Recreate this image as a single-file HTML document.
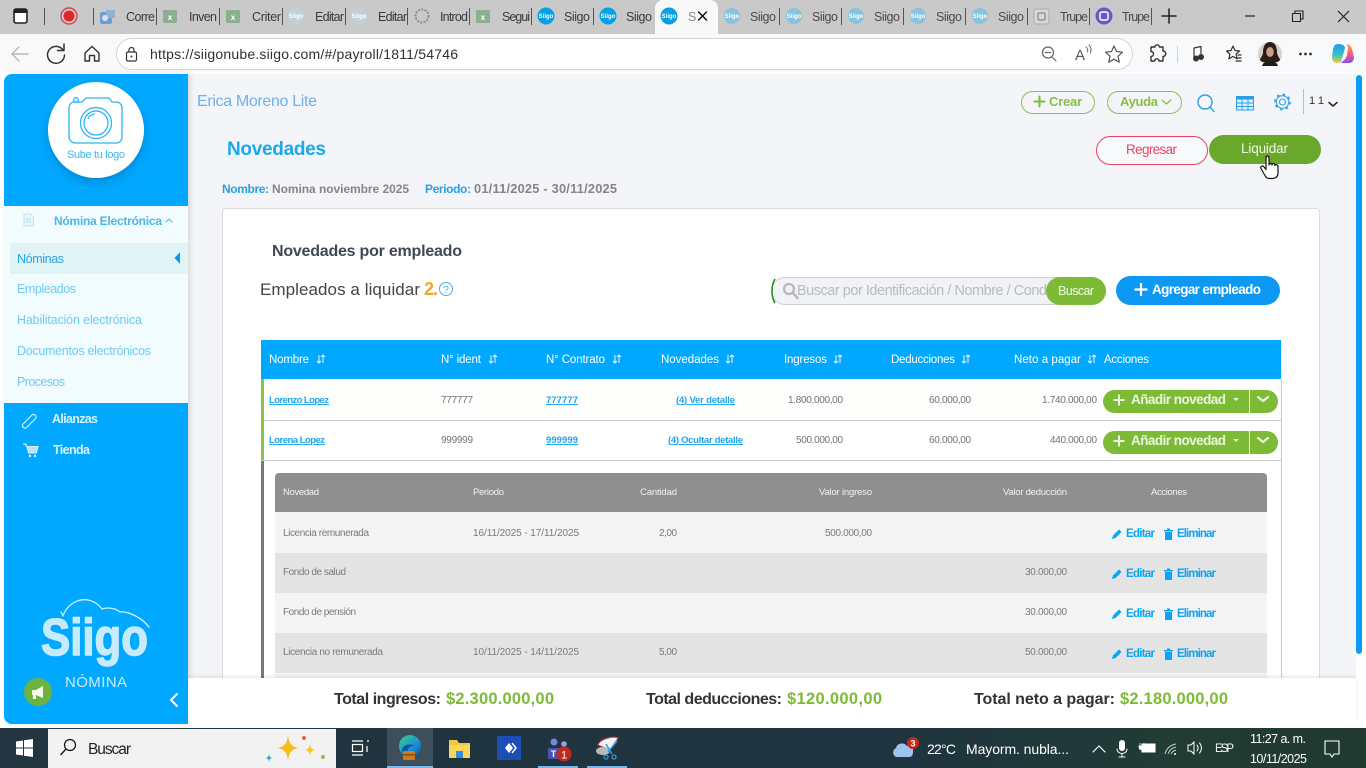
<!DOCTYPE html>
<html lang="es"><head><meta charset="utf-8"><title>Siigo Nube - Novedades</title>
<style>
html,body{margin:0;padding:0;width:1366px;height:768px;overflow:hidden;background:#fff;font-family:"Liberation Sans",Arial,sans-serif}
.b{position:absolute;box-sizing:border-box}
svg{position:absolute;left:0;top:0;filter:blur(.3px)}
text{font-family:"Liberation Sans",Arial,sans-serif;white-space:pre}
.tb{font-size:12.5px;fill:#3a3a3a}.tf{font-size:12.5px;fill:#4a4a4a}
.side{font-size:12.5px;fill:#6fcbf2}
.th{font-size:11.5px;fill:#fff}
.lk{font-size:9.5px;font-weight:700;fill:#1ea5ec;text-decoration:underline}
.n{font-size:10px;fill:#737373}
.sh{font-size:9.5px;fill:#f2f2f2}
.sr{font-size:10px;fill:#7a7a7a}
.ac{font-size:11.5px;font-weight:700;fill:#0ca4f5}
.tot{font-size:16px;font-weight:700;fill:#333}
.gr{font-size:16.5px;font-weight:700;fill:#7dbb36}
.add{font-size:13.5px;font-weight:700;fill:#eaf6dc}
.w{fill:#fff}
.ln{fill:none;stroke-linecap:round;stroke-linejoin:round}
</style></head><body>
<!-- browser chrome -->
<div class="b" style="left:0;top:0;width:1366px;height:34px;background:#c9c9c9"></div>
<div class="b" style="left:655px;top:0;width:63px;height:34px;background:#f8f8f8;border-radius:8px 8px 0 0"></div>
<div class="b" style="left:0;top:34px;width:1366px;height:40px;background:#f8f9fa"></div>
<div class="b" style="left:116px;top:38px;width:1017px;height:32px;background:#fff;border:1px solid #d4d4d4;border-radius:16px"></div>
<!-- page -->
<div class="b" style="left:0;top:72px;width:1366px;height:656px;background:#fff"></div>
<div class="b" style="left:188px;top:74px;width:1168px;height:604px;background:#f3f5f9"></div>
<div class="b" style="left:1356px;top:75px;width:6px;height:579px;background:#0a9bf6;border-radius:3px"></div>
<div class="b" style="left:222px;top:208px;width:1098px;height:480px;background:#fff;border:1px solid #dcdcdc;border-radius:4px"></div>
<!-- sidebar -->
<div class="b" style="left:4px;top:74px;width:184px;height:650px;background:#00a9ff;border-radius:8px 0 0 8px;box-shadow:2px 0 6px rgba(0,0,0,.12)"></div>
<div class="b" style="left:4px;top:206px;width:184px;height:197px;background:#f2fcfe"></div>
<div class="b" style="left:10px;top:243px;width:178px;height:31px;background:#e0f3f5"></div>
<div class="b" style="left:48px;top:82px;width:96px;height:96px;border-radius:50%;background:#fff;box-shadow:0 4px 10px rgba(0,60,120,.3)"></div>
<!-- buttons -->
<div class="b" style="left:1021px;top:91px;width:74px;height:23px;border:1px solid #8cc152;border-radius:12px"></div>
<div class="b" style="left:1107px;top:91px;width:75px;height:23px;border:1px solid #8cc152;border-radius:12px"></div>
<div class="b" style="left:1096px;top:136px;width:112px;height:29px;border:1px solid #e8436a;border-radius:15px;background:#f8f9fb"></div>
<div class="b" style="left:1209px;top:135px;width:112px;height:29px;background:#6aa82c;border-radius:15px"></div>
<div class="b" style="left:771px;top:277px;width:330px;height:28px;background:#f0f2f6;border:1px solid #cfcfcf;border-radius:14px"></div>
<div class="b" style="left:1046px;top:277px;width:60px;height:28px;background:#7dbb36;border-radius:14px"></div>
<div class="b" style="left:1116px;top:276px;width:164px;height:29px;background:#0d98f3;border-radius:15px"></div>
<!-- main table -->
<div class="b" style="left:261px;top:340px;width:1020px;height:39px;background:#00a9ff"></div>
<div class="b" style="left:261px;top:379px;width:1020px;height:42px;background:#fdfdfb;border-bottom:1px solid #c9c9c9"></div>
<div class="b" style="left:261px;top:421px;width:1020px;height:40px;background:#fff;border-bottom:1px solid #c9c9c9"></div>
<div class="b" style="left:261px;top:379px;width:3px;height:81px;background:#8bc34a"></div>
<div class="b" style="left:261px;top:461px;width:3px;height:217px;background:#777"></div>
<div class="b" style="left:1281px;top:379px;width:1px;height:299px;background:#c9c9c9"></div>
<div class="b" style="left:1103px;top:390px;width:146px;height:23px;background:#7dbb36;border-radius:12px 0 0 12px"></div>
<div class="b" style="left:1250px;top:390px;width:28px;height:23px;background:#7dbb36;border-radius:0 12px 12px 0"></div>
<div class="b" style="left:1103px;top:431px;width:146px;height:23px;background:#7dbb36;border-radius:12px 0 0 12px"></div>
<div class="b" style="left:1250px;top:431px;width:28px;height:23px;background:#7dbb36;border-radius:0 12px 12px 0"></div>
<!-- sub table -->
<div class="b" style="left:275px;top:473px;width:992px;height:39px;background:#8f8f8f;border-radius:4px 4px 0 0"></div>
<div class="b" style="left:275px;top:512px;width:992px;height:41px;background:#f4f4f4"></div>
<div class="b" style="left:275px;top:553px;width:992px;height:40px;background:#e4e4e4"></div>
<div class="b" style="left:275px;top:593px;width:992px;height:40px;background:#f4f4f4"></div>
<div class="b" style="left:275px;top:633px;width:992px;height:40px;background:#e4e4e4"></div>
<div class="b" style="left:275px;top:673px;width:992px;height:5px;background:#f4f4f4"></div>
<!-- footer -->
<div class="b" style="left:188px;top:678px;width:1168px;height:46px;background:#fff;box-shadow:0 -2px 3px rgba(0,0,0,.08)"></div>
<!-- taskbar -->
<div class="b" style="left:0;top:728px;width:1366px;height:40px;background:linear-gradient(90deg,#223540 0%,#1f3440 65%,#223c33 88%,#21392f 100%)"></div>
<div class="b" style="left:48px;top:729px;width:288px;height:39px;background:#f2f2f2"></div>
<div class="b" style="left:387px;top:728px;width:46px;height:40px;background:#3d4f5a"></div>
<div class="b" style="left:387px;top:766px;width:46px;height:2px;background:#76b9ed"></div>
<div class="b" style="left:538px;top:766px;width:40px;height:2px;background:#76b9ed"></div>
<div class="b" style="left:587px;top:766px;width:40px;height:2px;background:#76b9ed"></div>

<svg width="1366" height="768" viewBox="0 0 1366 768" xmlns="http://www.w3.org/2000/svg">
<defs>
<linearGradient id="cp" x1="0" y1="0" x2="0" y2="1"><stop offset="0" stop-color="#1f9be8"/><stop offset=".55" stop-color="#35c0c8"/><stop offset="1" stop-color="#f0c93a"/></linearGradient>
<linearGradient id="cp2" x1="0" y1="0" x2="0" y2="1"><stop offset="0" stop-color="#f5a13a"/><stop offset=".55" stop-color="#ee5a8a"/><stop offset="1" stop-color="#8a4fe0"/></linearGradient>
<linearGradient id="ed" x1="0" y1="0" x2="1" y2="1"><stop offset="0" stop-color="#3bd08a"/><stop offset=".6" stop-color="#1b8fd8"/><stop offset="1" stop-color="#0c4f9e"/></linearGradient>
</defs>
<!-- tab strip -->
<rect x="14" y="9" width="13" height="14" rx="2" fill="#fff" stroke="#222" stroke-width="1.6"/><rect x="14" y="9" width="13" height="4" fill="#222"/>
<g fill="#555"><rect x="44" y="8" width="1" height="17"/><rect x="93" y="8" width="1" height="17"/><rect x="156" y="8" width="1" height="17"/><rect x="219" y="8" width="1" height="17"/><rect x="282" y="8" width="1" height="17"/><rect x="345" y="8" width="1" height="17"/><rect x="407" y="8" width="1" height="17"/><rect x="469" y="8" width="1" height="17"/><rect x="531" y="8" width="1" height="17"/><rect x="593" y="8" width="1" height="17"/><rect x="779" y="8" width="1" height="17"/><rect x="841" y="8" width="1" height="17"/><rect x="903" y="8" width="1" height="17"/><rect x="965" y="8" width="1" height="17"/><rect x="1027" y="8" width="1" height="17"/><rect x="1089" y="8" width="1" height="17"/><rect x="1151" y="8" width="1" height="17"/></g>
<circle cx="69" cy="16" r="8" fill="none" stroke="#d8454a" stroke-width="1.4"/><circle cx="69" cy="16" r="5.5" fill="#e0262b"/>
<rect x="100" y="12" width="12" height="12" rx="2" fill="#6d9fd0"/><path d="M106 10l9 0 0 8-9 0z" fill="#8fb3d6"/><circle cx="105" cy="18" r="3" fill="#fff" opacity=".7"/>
<g fill="#8bb08f"><rect x="163" y="10" width="14" height="13" rx="1"/><rect x="226" y="10" width="14" height="13" rx="1"/><rect x="476" y="10" width="14" height="13" rx="1"/></g>
<g font-size="8" fill="#fff" text-anchor="middle" font-weight="700"><text x="170" y="20">x</text><text x="233" y="20">x</text><text x="483" y="20">x</text></g>
<g fill="#bfd0d8"><circle cx="296" cy="16" r="8"/><circle cx="359" cy="16" r="8"/></g>
<circle cx="422" cy="16" r="6.5" fill="none" stroke="#8a8a8a" stroke-width="2" stroke-dasharray="2 1.3"/>
<g fill="#06a0e6"><circle cx="546" cy="16" r="8.5"/><circle cx="608" cy="16" r="8.5"/><circle cx="669" cy="16" r="8.5"/></g>
<g fill="#86c3dd"><circle cx="732" cy="16" r="8"/><circle cx="794" cy="16" r="8"/><circle cx="856" cy="16" r="8"/><circle cx="918" cy="16" r="8"/><circle cx="980" cy="16" r="8"/></g>
<g font-size="6" fill="#fff" text-anchor="middle" font-weight="700"><text x="296" y="18">Siigo</text><text x="359" y="18">Siigo</text><text x="546" y="18">Siigo</text><text x="608" y="18">Siigo</text><text x="669" y="18">Siigo</text><text x="732" y="18">Siigo</text><text x="794" y="18">Siigo</text><text x="856" y="18">Siigo</text><text x="918" y="18">Siigo</text><text x="980" y="18">Siigo</text></g>
<rect x="1034" y="9" width="15" height="15" rx="2" fill="#d8d8d8" stroke="#aaa"/><rect x="1038" y="13" width="7" height="7" rx="1" fill="none" stroke="#777"/>
<circle cx="1104" cy="16" r="8.5" fill="#6a5ac8"/><rect x="1100" y="12" width="8" height="8" rx="2" fill="none" stroke="#fff" stroke-width="1.5"/>
<text class="tb" x="126" y="21" textLength="29">Corre</text><text class="tb" x="189" y="21" textLength="28">Inven</text><text class="tb" x="252" y="21" textLength="29">Criter</text><text class="tb" x="315" y="21" textLength="29">Editar</text><text class="tb" x="378" y="21" textLength="29">Editar</text><text class="tb" x="440" y="21" textLength="28">Introd</text><text class="tb" x="502" y="21" textLength="28">Segui</text><text class="tb" x="564" y="21" textLength="26">Siigo</text><text class="tb" x="626" y="21" textLength="26">Siigo</text><text x="688" y="21" font-size="12.5" fill="#888" textLength="4">S</text>
<text class="tf" x="750" y="21" textLength="26">Siigo</text><text class="tf" x="812" y="21" textLength="26">Siigo</text><text class="tf" x="874" y="21" textLength="26">Siigo</text><text class="tf" x="936" y="21" textLength="26">Siigo</text><text class="tf" x="998" y="21" textLength="26">Siigo</text><text class="tf" x="1060" y="21" textLength="28">Trupe</text><text class="tf" x="1122" y="21" textLength="28">Trupe</text>
<path class="ln" d="M698.500 12l8 8M706.500 12l-8 8" stroke="#111" stroke-width="1.500"/>
<path class="ln" d="M1169 9v14M1162 16h14" stroke="#222" stroke-width="1.5"/>
<path d="M1245 16h10" stroke="#222" stroke-width="1.2"/>
<path fill="none" stroke="#222" stroke-width="1.1" d="M1292.500 13.500h8v8h-8zM1295 13.500v-2.500h8v8h-2.500"/>
<path d="M1338 11l11 11M1349 11l-11 11" stroke="#222" stroke-width="1.2"/>
<!-- toolbar -->
<path class="ln" d="M28 54H12M19 47l-7 7 7 7" stroke="#b8b8b8" stroke-width="1.4"/>
<path class="ln" d="M63 50a8.500 8.500 0 1 0 1.500 5M64 44v6.500h-6.500" stroke="#333" stroke-width="1.5"/>
<path class="ln" d="M85 53l7-6.500 7 6.500v8h-4.500v-5.500h-5V61H85z" stroke="#333" stroke-width="1.4"/>
<rect x="126.500" y="52" width="10" height="9" rx="1.500" fill="none" stroke="#333" stroke-width="1.2"/><path d="M129 52v-2a2.500 2.500 0 0 1 5 0v2" fill="none" stroke="#333" stroke-width="1.2"/><circle cx="131.500" cy="56.500" r="1" fill="#333"/>
<text x="150" y="59" font-size="14" fill="#303030" textLength="308">https://siigonube.siigo.com/#/payroll/1811/54746</text>
<circle cx="1048" cy="52.500" r="5.500" fill="none" stroke="#666" stroke-width="1.2"/><path class="ln" d="M1045.500 52.500h5M1052 57l4 4" stroke="#666" stroke-width="1.2"/>
<text x="1075" y="60" font-size="15" fill="#555">A</text><path class="ln" d="M1086 47c1.500 1 2 3 1.500 5M1089 45c2 2 2.500 5 1.500 8" stroke="#666" stroke-width="1"/>
<path class="ln" d="M1114 46l2.500 5.500 6 .7-4.500 4 1.300 6-5.300-3-5.300 3 1.300-6-4.500-4 6-.7z" stroke="#555" stroke-width="1.2"/>
<path class="ln" d="M1152 47h3a2.200 2.200 0 0 1 4.400 0h3.600v4a2.200 2.200 0 0 1 0 5.500v4.500h-4a2.200 2.200 0 0 0-4.400 0H1151v-4.500a2.200 2.200 0 0 0 0-5V47z" stroke="#333" stroke-width="1.4"/>
<rect x="1177" y="46" width="1" height="17" fill="#d0d0d0"/>
<path class="ln" d="M1194 57v-9l7-1.500v7" stroke="#333" stroke-width="1.2"/><circle cx="1196" cy="58.500" r="3" fill="#333"/><circle cx="1201" cy="57" r="3" fill="#333"/>
<path class="ln" d="M1233 46l2 4.500 4.500.5-3.400 3 1 4.800-4.100-2.400-4.100 2.400 1-4.800-3.400-3 4.500-.5zM1238 55h3M1238 58h3M1236 61h5" stroke="#333" stroke-width="1.2"/>
<circle cx="1270" cy="54" r="12" fill="#d6d3cf"/><path d="M1270 42c-5 0-7 5-7 10 0 4-3 6-3 8 3 4 17 4 20 0 0-2-3-4-3-8 0-5-2-10-7-10z" fill="#2a1d18"/><ellipse cx="1270" cy="52" rx="3.800" ry="5" fill="#c9a08a"/><path d="M1262 66c1-6 15-6 16 0z" fill="#1b1b1b"/>
<g fill="#333"><circle cx="1300.500" cy="54" r="1.400"/><circle cx="1305.500" cy="54" r="1.400"/><circle cx="1310.500" cy="54" r="1.400"/></g>
<path d="M1338 44c-3 0-4 2-5 5l-1 8c0 4 2 6 5 6l4-1 4-14c0-3-4-4-7-4z" fill="url(#cp)"/><path d="M1346 44c3 0 5 2 6 5l2 8c0 4-2 6-5 6h-8l3-3c2-1 2-3 3-5l1-7c0-2-1-4-2-4z" fill="url(#cp2)"/>
<!-- header -->
<text x="197" y="106" font-size="16" fill="#6cb2ea" textLength="120">Erica Moreno Lite</text>
<path class="ln" d="M1039.500 96.500v10M1034.500 101.500h10" stroke="#7dbb36" stroke-width="2"/>
<text x="1049" y="106" font-size="13" font-weight="700" fill="#86bf45" textLength="33">Crear</text>
<text x="1120" y="106" font-size="13" font-weight="700" fill="#86bf45" textLength="38">Ayuda</text>
<path class="ln" d="M1162 100l4.500 4 4.500-4" stroke="#86bf45" stroke-width="1.200"/>
<circle cx="1205" cy="102" r="7" fill="none" stroke="#2a9fe8" stroke-width="1.400"/><path class="ln" d="M1210 107l4 4.500" stroke="#2a9fe8" stroke-width="1.400"/>
<rect x="1236.500" y="96.500" width="17" height="13.500" fill="#d8effc" stroke="#2a9fe8" stroke-width="1"/><rect x="1236" y="96" width="18" height="3.500" fill="#2a9fe8"/><path d="M1236.500 103h17M1236.500 106.500h17M1242 99.500V110M1248 99.500V110" stroke="#2a9fe8" stroke-width=".9"/>
<circle cx="1282.500" cy="102" r="6.300" fill="none" stroke="#2a9fe8" stroke-width="1.100"/><circle cx="1282.500" cy="102" r="7.600" fill="none" stroke="#2a9fe8" stroke-width="1.600" stroke-dasharray="2.400 3.570"/><circle cx="1282.500" cy="102" r="3" fill="none" stroke="#2a9fe8" stroke-width="1.100"/>
<rect x="1303" y="89" width="1" height="25" fill="#bcbcbc"/>
<text x="1309" y="104" font-size="11" fill="#333" textLength="15">1 1</text>
<path class="ln" d="M1329 102.500l4 3.500 4-3.500" stroke="#222" stroke-width="1.500"/>
<text x="227" y="155" font-size="19" font-weight="700" fill="#1aa9ee" textLength="99">Novedades</text>
<text x="1126" y="154" font-size="13.500" fill="#e8436a" textLength="51">Regresar</text>
<text x="1241" y="153" font-size="13.500" fill="#f1f8e8" textLength="47">Liquidar</text>
<text x="222" y="193" font-size="12" font-weight="700" fill="#2b9fe6" textLength="47">Nombre:</text>
<text x="272" y="193" font-size="12" font-weight="700" fill="#858585" textLength="137">Nomina noviembre 2025</text>
<text x="425" y="193" font-size="12" font-weight="700" fill="#2b9fe6" textLength="46">Periodo:</text>
<text x="474" y="193" font-size="12.800" font-weight="700" fill="#858585" textLength="143">01/11/2025 - 30/11/2025</text>
<!-- card head -->
<text x="272" y="256" font-size="16" font-weight="700" fill="#414855" textLength="190">Novedades por empleado</text>
<text x="260" y="295" font-size="17" fill="#444" textLength="160">Empleados a liquidar</text>
<text x="424" y="295" font-size="18" font-weight="700" fill="#f5a623" textLength="14">2.</text>
<circle cx="446" cy="289" r="6.500" fill="none" stroke="#4aaee8" stroke-width="1"/><text x="446" y="293" font-size="10" fill="#4aaee8" text-anchor="middle">?</text>
<path d="M775 279c-4 6-4 18 0 24" fill="none" stroke="#1f8a1f" stroke-width="1.500"/>
<circle cx="789" cy="289" r="5" fill="none" stroke="#b9b9b9" stroke-width="2.300"/><path class="ln" d="M793 293l4.500 5" stroke="#b9b9b9" stroke-width="2.600"/>
<text x="797" y="295" font-size="14.500" fill="#b9bbbf" textLength="250">Buscar por Identificación / Nombre / Cond</text>
<text x="1058" y="295" font-size="12.500" fill="#f1f8e8" textLength="36">Buscar</text>
<path d="M1141 283v13M1134.500 289.500h13" stroke="#fff" stroke-width="2.200"/>
<text x="1152" y="294" font-size="13.500" font-weight="700" class="w" textLength="109">Agregar empleado</text>
<!-- table head -->
<text class="th" x="269" y="363" textLength="40">Nombre</text><text class="th" x="441" y="363" textLength="40">N° ident</text><text class="th" x="546" y="363" textLength="59">N° Contrato</text><text class="th" x="661" y="363" textLength="58">Novedades</text><text class="th" x="784" y="363" textLength="43">Ingresos</text><text class="th" x="891" y="363" textLength="64">Deducciones</text><text class="th" x="1014" y="363" textLength="67">Neto a pagar</text><text class="th" x="1104" y="363" textLength="45">Acciones</text>
<g stroke="#e6f6ff" stroke-width="1" fill="none"><path d="M319 355v8m-2-2l2 2 2-2M323 363v-8m-2 2l2-2 2 2"/><path d="M491 355v8m-2-2l2 2 2-2M495 363v-8m-2 2l2-2 2 2"/><path d="M615 355v8m-2-2l2 2 2-2M619 363v-8m-2 2l2-2 2 2"/><path d="M728 355v8m-2-2l2 2 2-2M732 363v-8m-2 2l2-2 2 2"/><path d="M836 355v8m-2-2l2 2 2-2M840 363v-8m-2 2l2-2 2 2"/><path d="M964 355v8m-2-2l2 2 2-2M968 363v-8m-2 2l2-2 2 2"/><path d="M1090 355v8m-2-2l2 2 2-2M1094 363v-8m-2 2l2-2 2 2"/></g>
<!-- rows -->
<text class="lk" x="269" y="403" textLength="60">Lorenzo Lopez</text><text class="n" x="441" y="403" textLength="32">777777</text><text class="lk" x="546" y="403" textLength="32">777777</text><text class="lk" x="676" y="403" textLength="59">(4) Ver detalle</text><text class="n" x="788" y="403" textLength="55">1.800.000,00</text><text class="n" x="929" y="403" textLength="42">60.000,00</text><text class="n" x="1042" y="403" textLength="55">1.740.000,00</text>
<text class="lk" x="269" y="443" textLength="56">Lorena Lopez</text><text class="n" x="441" y="443" textLength="32">999999</text><text class="lk" x="546" y="443" textLength="32">999999</text><text class="lk" x="668" y="443" textLength="75">(4) Ocultar detalle</text><text class="n" x="796" y="443" textLength="47">500.000,00</text><text class="n" x="929" y="443" textLength="42">60.000,00</text><text class="n" x="1050" y="443" textLength="47">440.000,00</text>
<g stroke="#eaf6dc" stroke-width="2"><path d="M1119 394.500v11M1113.500 400h11"/><path d="M1119 435.500v11M1113.500 441h11"/></g>
<text class="add" x="1131" y="404" textLength="95">Añadir novedad</text><text class="add" x="1131" y="445" textLength="95">Añadir novedad</text>
<g fill="#eaf6dc"><path d="M1233 398h6l-3 3z"/><path d="M1233 439h6l-3 3z"/></g>
<g class="ln" stroke="#eaf6dc" stroke-width="2.200" fill="none"><path d="M1258 397l5 4 5-4"/><path d="M1258 438l5 4 5-4"/></g>
<!-- sub table text -->
<text class="sh" x="283" y="495" textLength="36">Novedad</text><text class="sh" x="473" y="495" textLength="31">Periodo</text><text class="sh" x="640" y="495" textLength="37">Cantidad</text><text class="sh" x="819" y="495" textLength="53">Valor ingreso</text><text class="sh" x="1003" y="495" textLength="64">Valor deducción</text><text class="sh" x="1151" y="495" textLength="36">Acciones</text>
<text class="sr" x="283" y="536" textLength="86">Licencia remunerada</text><text class="sr" x="473" y="536" textLength="106">16/11/2025 - 17/11/2025</text><text class="sr" x="659" y="536" textLength="18">2,00</text><text class="sr" x="825" y="536" textLength="47">500.000,00</text>
<text class="sr" x="283" y="575" textLength="63">Fondo de salud</text><text class="sr" x="1025" y="575" textLength="42">30.000,00</text>
<text class="sr" x="283" y="615" textLength="73">Fondo de pensión</text><text class="sr" x="1025" y="615" textLength="42">30.000,00</text>
<text class="sr" x="283" y="655" textLength="100">Licencia no remunerada</text><text class="sr" x="473" y="655" textLength="106">10/11/2025 - 14/11/2025</text><text class="sr" x="659" y="655" textLength="18">5,00</text><text class="sr" x="1025" y="655" textLength="42">50.000,00</text>
<text class="ac" x="1126" y="537" textLength="29">Editar</text><text class="ac" x="1177" y="537" textLength="39">Eliminar</text>
<text class="ac" x="1126" y="577" textLength="29">Editar</text><text class="ac" x="1177" y="577" textLength="39">Eliminar</text>
<text class="ac" x="1126" y="617" textLength="29">Editar</text><text class="ac" x="1177" y="617" textLength="39">Eliminar</text>
<text class="ac" x="1126" y="657" textLength="29">Editar</text><text class="ac" x="1177" y="657" textLength="39">Eliminar</text>
<g fill="#0ca4f5">
<path d="M1112 539l1-3.500 6-6 2.500 2.500-6 6z"/><path d="M1164 530h9v1.500h-9zM1167 528.500h3v1.500h-3zM1165 532h7v8h-7z"/>
<path d="M1112 579l1-3.500 6-6 2.500 2.500-6 6z"/><path d="M1164 570h9v1.500h-9zM1167 568.500h3v1.500h-3zM1165 572h7v8h-7z"/>
<path d="M1112 619l1-3.500 6-6 2.500 2.500-6 6z"/><path d="M1164 610h9v1.500h-9zM1167 608.500h3v1.500h-3zM1165 612h7v8h-7z"/>
<path d="M1112 659l1-3.500 6-6 2.500 2.500-6 6z"/><path d="M1164 650h9v1.500h-9zM1167 648.500h3v1.500h-3zM1165 652h7v8h-7z"/>
</g>
<!-- footer text -->
<text class="tot" x="334" y="704" textLength="107">Total ingresos:</text><text class="gr" x="446" y="704" textLength="108">$2.300.000,00</text>
<text class="tot" x="646" y="704" textLength="136">Total deducciones:</text><text class="gr" x="787" y="704" textLength="95">$120.000,00</text>
<text class="tot" x="974" y="704" textLength="141">Total neto a pagar:</text><text class="gr" x="1120" y="704" textLength="108">$2.180.000,00</text>
<!-- sidebar content -->
<g fill="none" stroke="#29b6f6" stroke-width="1.300">
<path d="M74 102h8l4-4h23l3 4h4c4 0 6 3 6 6v29c0 3-2 6-6 6H75c-3 0-6-3-6-6v-29c0-3 2-6 5-6z"/><circle cx="96" cy="123" r="15.500"/><circle cx="96" cy="123" r="12"/><path d="M88 119c1-3 4-5 7-5"/><circle cx="76" cy="100" r="2.300"/></g>
<text x="67" y="158" font-size="11" fill="#3bb8f2" textLength="58">Sube tu logo</text>
<path d="M24 214h6.500l3 3v9H24z" fill="#e8f6fb" stroke="#bfe3f0"/><path d="M26 219h5M26 222h5" stroke="#a9d9ec" stroke-width="1"/>
<text x="54" y="225" font-size="12" font-weight="700" fill="#4db6e8" textLength="108">Nómina Electrónica</text>
<path class="ln" d="M166 222l3-3 3 3" stroke="#4db6e8" stroke-width="1"/>
<text x="17" y="263" font-size="12.500" fill="#2aa4e6" textLength="47">Nóminas</text>
<path d="M180 252v12l-5.500-6z" fill="#0a9bf0"/>
<text class="side" x="17" y="293" textLength="59">Empleados</text><text class="side" x="17" y="324" textLength="125">Habilitación electrónica</text><text class="side" x="17" y="355" textLength="134">Documentos electrónicos</text><text class="side" x="17" y="386" textLength="48">Procesos</text>
<g fill="none" stroke="#cdeefd" stroke-width="1.200"><path d="M23 424l9-9a2.500 2.500 0 0 1 3.500 3.500l-9 9a2.500 2.500 0 0 1-3.500-3.500zM27.500 419.500l4-4"/></g>
<path d="M23 444h3l2.500 9h8l1.500-6.500h-11" fill="#b6e6fd" stroke="#d5f1fe" stroke-width="1"/><circle cx="30" cy="456" r="1.200" fill="#d5f1fe"/><circle cx="35" cy="456" r="1.200" fill="#d5f1fe"/>
<text x="52" y="423" font-size="12.500" font-weight="700" fill="#d8f2fe" textLength="46">Alianzas</text>
<text x="53" y="454" font-size="12.500" font-weight="700" fill="#d8f2fe" textLength="37">Tienda</text>
<!-- siigo logo -->
<path class="ln" d="M61 612l2 4c3-10 14-18 25-16 6 1 11 5 14 9 6-2 13-1 18 3 8-1 21 5 29 15" stroke="#d3effd" stroke-width="1.300"/>
<text x="41" y="655" font-size="52" font-weight="700" fill="#c7ebfd" stroke="#c7ebfd" stroke-width="1.500" textLength="107" lengthAdjust="spacingAndGlyphs">Siigo</text>
<text x="65" y="687" font-size="15" fill="#c7ebfd" textLength="62">NÓMINA</text>
<circle cx="38" cy="692" r="14" fill="#6cb33f"/><path d="M32 690h4l7-4v12l-7-3v4h-3v-4h-1z" fill="#f4fbee"/>
<path class="ln" d="M177 694l-6 6 6 6" stroke="#fff" stroke-width="2"/>
<!-- cursor -->
<path d="M1266 158c0-2.500 3-2.500 3 0v7c0-2 3-2 3 0 0-2 3-2 3 .5 .5-1.500 3-1 3 1v6c0 4-2 6-6 6h-2c-3 0-4-1-5-3l-4-7c-1-2 1.500-3.500 3-1.500l2 2.500z" fill="#fff" stroke="#111" stroke-width="1.200" stroke-linejoin="round"/>
<!-- taskbar -->
<g fill="#fff"><path d="M16 741.500l7-1v7h-7zM24 740.300l9-1.300v8.500h-9zM16 748.500h7v7l-7-1zM24 748.500h9v8.500l-9-1.300z"/></g>
<circle cx="70" cy="745" r="5.500" fill="none" stroke="#111" stroke-width="1.200"/><path d="M66 749l-5.500 6" stroke="#111" stroke-width="1.300"/>
<text x="88" y="754" font-size="15.500" fill="#222" textLength="43">Buscar</text>
<path d="M288 736c1.500 8 3 10 10 12-7 2-8.500 4-10 12-1.500-8-3-10-10-12 7-2 8.500-4 10-12z" fill="#f8bb17"/><path d="M310 744c.7 4 1.500 5 5 6-3.500 1-4.300 2-5 6-.7-4-1.500-5-5-6 3.500-1 4.300-2 5-6z" fill="#f8c32c"/><path d="M269 754c.5 3 1 3.500 3.500 4-2.500.5-3 1-3.500 4-.5-3-1-3.500-3.500-4 2.500-.5 3-1 3.500-4z" fill="#2a9fe0"/><circle cx="304" cy="738" r="2" fill="#e2673a"/><circle cx="323" cy="757" r="2" fill="#8cc152"/>
<g fill="none" stroke="#fff" stroke-width="1.200"><rect x="352.500" y="744.500" width="10" height="7"/><path d="M352 741h11M352 755h11"/><path d="M367 741h2M367 746v6"/></g>
<circle cx="410" cy="746" r="11" fill="url(#ed)"/><path d="M402 749c2-5 9-6 13-3-2 0-5 0-7 3-1 2 0 5 3 6-5 1-10-1-9-6z" fill="#0c5aa6"/><rect x="403" y="751" width="12" height="9" rx="1" fill="#c97a1e"/><rect x="403" y="754" width="12" height="1.500" fill="#8a4d10"/>
<path d="M449 740h8l2 3h11v15h-21z" fill="#f3c640"/><rect x="449" y="745" width="21" height="13" fill="#fad75a"/><rect x="456" y="751" width="7" height="7" fill="#2f8fd8"/>
<rect x="497" y="736" width="24" height="24" fill="#1b4fb5"/><path d="M505 748l4-5 4 5-4 5z" fill="#fff"/><path d="M512 743l4 5-4 5" fill="none" stroke="#fff" stroke-width="1.500"/>
<circle cx="554" cy="742" r="3.500" fill="#7b83d8"/><circle cx="564" cy="744" r="2.800" fill="#9aa0e2"/><path d="M548 748h20v10h-20z" fill="#6a71c8"/><rect x="548" y="748" width="11" height="11" rx="1.500" fill="#4a52b0"/><text x="553.500" y="757" font-size="9" font-weight="700" fill="#fff" text-anchor="middle">T</text><circle cx="564" cy="754" r="7.500" fill="#c4281c"/><text x="564" y="758.500" font-size="11" fill="#fff" text-anchor="middle">1</text>
<path d="M598 745c2-6 14-9 20-7l-8 12z" fill="#f2f2f2" stroke="#d04a4a"/><ellipse cx="603" cy="751" rx="7" ry="4" fill="#b9b9b9"/><path d="M617 741l-9 11M606 744l6 10" stroke="#2a9fd8" stroke-width="1.500"/><circle cx="606" cy="757" r="2" fill="none" stroke="#2a9fd8" stroke-width="1.200"/><circle cx="614" cy="757" r="2" fill="none" stroke="#2a9fd8" stroke-width="1.200"/>
<path d="M896 757a5 5 0 0 1 0-9c1-5 8-6 11-2 4-1 7 2 6 6 0 3-1 5-4 5z" fill="#9cc3ee"/><circle cx="913" cy="743" r="6" fill="#c4281c"/><text x="913" y="746.500" font-size="9" font-weight="700" fill="#fff" text-anchor="middle">3</text>
<text x="927" y="754" font-size="14" fill="#fff" textLength="29">22°C</text>
<text x="966" y="754" font-size="14" fill="#fff" textLength="103">Mayorm. nubla...</text>
<path class="ln" d="M1093 752l6-6 6 6" stroke="#fff" stroke-width="1.200"/>
<rect x="1119" y="740" width="6" height="11" rx="3" fill="#fff"/><path class="ln" d="M1117 749c0 6 10 6 10 0M1122 754v2.500M1119 757h6" stroke="#fff"/>
<rect x="1142" y="744" width="13" height="8" fill="#fff" stroke="#fff"/><path d="M1140 746v-3M1144 746v-3M1139 746h6v2c0 1-2 2-3 2s-3-1-3-2z" fill="#fff" stroke="#fff" stroke-width=".7"/>
<g fill="none" stroke="#bfc8c8" stroke-width="1"><path d="M1165 754c1-5 5-9 11-10M1168 754c1-3 3-6 8-7M1171 754c.7-2 2-3 5-4"/></g><circle cx="1175" cy="754" r="1" fill="#fff"/>
<path d="M1188 745h3l3-3v12l-3-3h-3z" fill="none" stroke="#fff"/><path class="ln" d="M1197 745c1.500 2 1.500 4 0 6M1199.500 743c2.500 3 2.500 7 0 10" stroke="#fff"/>
<text x="1215" y="752" font-size="11.500" fill="#fff" textLength="19">ESP</text>
<text x="1250" y="743" font-size="12.500" fill="#fff" textLength="56">11:27 a. m.</text>
<text x="1250" y="763" font-size="12.500" fill="#fff" textLength="57">10/11/2025</text>
<path d="M1325 741h14v13h-5l-2 3-2-3h-5z" fill="none" stroke="#fff" stroke-width="1.100"/>
</svg>
</body></html>
